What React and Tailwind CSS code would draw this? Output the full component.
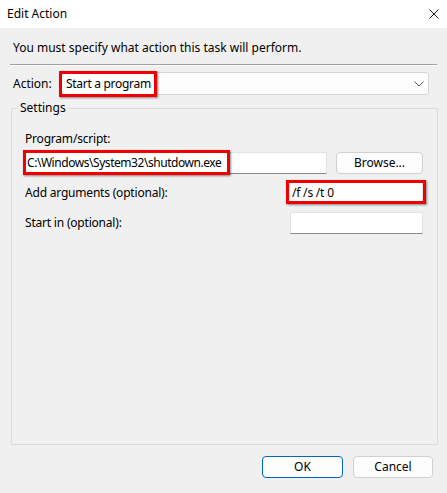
export default function App() {
  return (
    <div className="w-[447px] h-[493px] flex flex-col bg-[#f0f0f0] text-[12px] leading-[16px] text-black overflow-hidden font-['Noto_Sans',sans-serif]">
      {/* title bar */}
      <div className="h-[28px] bg-white flex items-center justify-between pl-[7px] pr-[7px]">
        <span>Edit Action</span>
        <svg width="10" height="10" viewBox="0 0 10 10" className="mr-[1px]">
          <path d="M0.5 0.5 L9.5 9.5 M9.5 0.5 L0.5 9.5" stroke="#1a1a1a" strokeWidth="1" />
        </svg>
      </div>

      <p className="ml-[13px] mt-[12px]">You must specify what action this task will perform.</p>
      <div className="mt-[8px] mx-[10px] h-[2px] border-t border-[#a0a0a0] border-b border-b-white" />

      {/* action */}
      <div className="mt-[6px] flex items-center h-[23px]">
        <span className="ml-[13px] w-[47px]">Action:</span>
        <div className="relative w-[369px] h-[23px] bg-[#fdfdfd] border border-[#d5d5d5] rounded-[3px] flex items-center justify-between pl-[5px] pr-[4px]">
          <span className="tracking-[-0.3px]">Start a program</span>
          <svg width="10" height="6" viewBox="0 0 10 6">
            <path d="M0.5 0.5 L5 5 L9.5 0.5" fill="none" stroke="#5a5a5a" strokeWidth="1" />
          </svg>
          <span className="absolute -left-[2px] -top-[2px] w-[98px] h-[26px] border-[3px] border-[#f00000] shadow-[1px_1px_2px_rgba(0,0,0,0.45)]" />
        </div>
      </div>

      {/* settings group */}
      <fieldset className="mt-[5px] ml-[11px] w-[427px] h-[345px] border border-[#dcdcdc]">
        <legend className="ml-[6px] px-[2px]">Settings</legend>
        <div className="px-[13px] flex flex-col tracking-[-0.2px]">
          <span className="mt-[15px]">Program/script:</span>
          <div className="mt-[5px] flex gap-[9px]">
            <div className="relative w-[302px] h-[22px] bg-white border border-[#e3e3e3] border-b-[#8a8a8a] flex items-center pl-[1px]">
              <span className="tracking-[-0.45px]">C:\Windows\System32\shutdown.exe</span>
              <span className="absolute -left-[3px] -top-[3px] w-[207px] h-[25px] border-[3px] border-[#f00000] shadow-[1px_1px_2px_rgba(0,0,0,0.45)]" />
            </div>
            <button className="w-[87px] h-[22px] bg-[#fdfdfd] border border-[#d0d0d0] rounded-[4px] tracking-normal">Browse...</button>
          </div>
          <div className="mt-[8px] flex items-center justify-between">
            <span>Add arguments (optional):</span>
            <div className="relative w-[134px] h-[21px] mr-[1px] bg-white border border-[#e3e3e3] border-b-[#8a8a8a] flex items-center pl-[2px]">
              <span>/f /s /t 0</span>
              <span className="absolute -left-[4px] -top-[3px] w-[140px] h-[24px] border-[3px] border-[#f00000] shadow-[1px_1px_2px_rgba(0,0,0,0.45)]" />
            </div>
          </div>
          <div className="mt-[9px] flex items-center justify-between">
            <span>Start in (optional):</span>
            <div className="w-[133px] h-[22px] mr-[1px] bg-white border border-[#e3e3e3] border-b-[#8a8a8a]" />
          </div>
        </div>
      </fieldset>

      {/* buttons */}
      <div className="mt-[11px] flex justify-end gap-[10px] pr-[14px]">
        <button className="w-[81px] h-[22px] bg-[#fdfdfd] border border-[#0067c0] rounded-[4px]">OK</button>
        <button className="w-[80px] h-[22px] bg-[#fdfdfd] border border-[#d0d0d0] rounded-[4px]">Cancel</button>
      </div>
    </div>
  )
}
